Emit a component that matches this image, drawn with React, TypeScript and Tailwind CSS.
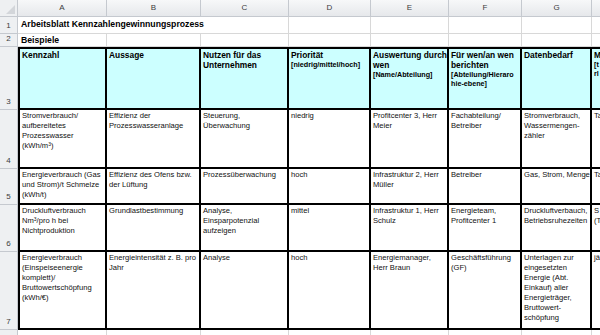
import React from 'react'

const cols = ['A', 'B', 'C', 'D', 'E', 'F', 'G', 'H', 'I']

const header: { title: string[]; sub?: string[] }[] = [
    { title: ['Kennzahl'] },
    { title: ['Aussage'] },
    { title: ['Nutzen für das', 'Unternehmen'] },
    { title: ['Priorität'], sub: ['[niedrig/mittel/hoch]'] },
    { title: ['Auswertung durch', 'wen'], sub: ['[Name/Abteilung]'] },
    { title: ['Für wen/an wen', 'berichten'], sub: ['[Abteilung/Hieraro', 'hie-ebene]'] },
    { title: ['Datenbedarf'] },
    { title: ['M'], sub: ['[t', 'rl'] },
]

const rows: { num: number; cells: React.ReactNode[][] }[] = [
    {
        num: 4,
        cells: [
            ['Stromverbrauch/', 'aufbereitetes', 'Prozesswasser', <>(kWh/m<sup className="text-[5px]">3</sup>)</>],
            ['Effizienz der', 'Prozesswasseranlage'],
            ['Steuerung,', 'Überwachung'],
            ['niedrig'],
            ['Profitcenter 3, Herr', 'Meier'],
            ['Fachabteilung/', 'Betreiber'],
            ['Stromverbrauch,', 'Wassermengen-', 'zähler'],
            ['Ta'],
        ],
    },
    {
        num: 5,
        cells: [
            ['Energieverbrauch (Gas', 'und Strom)/t Schmelze', '(kWh/t)'],
            ['Effizienz des Ofens bzw.', 'der Lüftung'],
            ['Prozessüberwachung'],
            ['hoch'],
            ['Infrastruktur 2, Herr', 'Müller'],
            ['Betreiber'],
            ['Gas, Strom, Menge'],
            ['Ta'],
        ],
    },
    {
        num: 6,
        cells: [
            ['Druckluftverbrauch', <>Nm<sup className="text-[5px]">3</sup>/pro h bei</>, 'Nichtproduktion'],
            ['Grundlastbestimmung'],
            ['Analyse,', 'Einsparpotenzial', 'aufzeigen'],
            ['mittel'],
            ['Infrastruktur 1, Herr', 'Schulz'],
            ['Energieteam,', 'Profitcenter 1'],
            ['Druckluftverbauch,', 'Betriebsruhezeiten'],
            ['S', '(T'],
        ],
    },
    {
        num: 7,
        cells: [
            ['Energieverbrauch', '(Einspeiseenergie', 'komplett)/', 'Bruttowertschöpfung', '(kWh/€)'],
            ['Energieintensität z. B. pro', 'Jahr'],
            ['Analyse'],
            ['hoch'],
            ['Energiemanager,', 'Herr Braun'],
            ['Geschäftsführung', '(GF)'],
            ['Unterlagen zur', 'eingesetzten', 'Energie (Abt.', 'Einkauf) aller', 'Energieträger,', 'Bruttowert-', 'schöpfung'],
            ['jä'],
        ],
    },
]

const rowHead = 'flex items-end justify-center bg-[#eef0f2] border-r border-b border-[#c5c9cf] text-[8px] text-[#3c3c3c] pb-[1px]'
const grid = 'border-r border-b border-[#d8d8d8] bg-white'

export default function App() {
    return (
        <div className="w-[600px] h-[335px] overflow-hidden bg-white" style={{ fontFamily: '"Liberation Sans", Arial, sans-serif' }}>
            <div className="grid grid-cols-[18px_89px_94px_88px_82px_78px_73px_70px_60px_40px] grid-rows-[17px_17px_13px_63px_59px_36px_47px_78px_20px] text-black">
                {/* Column headers */}
                <div className="relative bg-[#eef0f2] border-r border-b border-[#c5c9cf]">
                    <div className="absolute right-[2px] bottom-[2px] w-0 h-0 border-l-[9px] border-l-transparent border-b-[9px] border-b-[#d3d6da]" />
                </div>
                {cols.map(c => (
                    <div key={c} className="flex items-center justify-center bg-gradient-to-b from-[#f7f8f9] to-[#e6e8eb] border-r border-b border-[#c5c9cf] text-[8px] text-[#3c3c3c]">
                        {c}
                    </div>
                ))}

                {/* Row 1 */}
                <div className={rowHead}>1</div>
                <div className={`${grid} col-span-3 flex items-end pl-[3px] pb-[2px] text-[8.7px] font-bold whitespace-nowrap`}>
                    Arbeitsblatt Kennzahlengewinnungsprozess
                </div>
                {[1, 2, 3, 4, 5, 6].map(i => <div key={i} className={grid} />)}

                {/* Row 2 */}
                <div className={rowHead}>2</div>
                <div className={`${grid} flex items-end pl-[3px] text-[8.7px] font-bold leading-[11px]`}>Beispiele</div>
                {[1, 2, 3, 4, 5, 6, 7, 8].map(i => <div key={i} className={grid} />)}

                {/* Row 3 - table header */}
                <div className={rowHead}>3</div>
                {header.map((h, i) => (
                    <div
                        key={i}
                        className={`bg-[#ccffff] border-t-2 border-r-2 border-b-2 border-black ${i === 0 ? 'border-l-2' : ''} pl-[2px] pt-[1px] overflow-hidden whitespace-nowrap`}
                    >
                        {h.title.map((t, j) => (
                            <div key={j} className="text-[8.4px] font-bold leading-[10px]">{t}</div>
                        ))}
                        {h.sub?.map((t, j) => (
                            <div key={j} className="text-[7.2px] font-bold leading-[9px]">{t}</div>
                        ))}
                    </div>
                ))}
                <div className={grid} />

                {/* Data rows */}
                {rows.map(r => (
                    <React.Fragment key={r.num}>
                        <div className={rowHead}>{r.num}</div>
                        {r.cells.map((lines, i) => (
                            <div
                                key={i}
                                className={`bg-white border-r-2 border-b-2 border-black ${i === 0 ? 'border-l-2' : ''} pl-[2px] pt-[1px] overflow-hidden whitespace-nowrap text-[7.6px] leading-[10px] text-[#111]`}
                            >
                                {lines.map((l, j) => <div key={j}>{l}</div>)}
                            </div>
                        ))}
                        <div className={grid} />
                    </React.Fragment>
                ))}

                {/* Row 8 */}
                <div className={rowHead}>8</div>
                {[0, 1, 2, 3, 4, 5, 6, 7, 8].map(i => <div key={i} className={grid} />)}
            </div>
        </div>
    )
}
